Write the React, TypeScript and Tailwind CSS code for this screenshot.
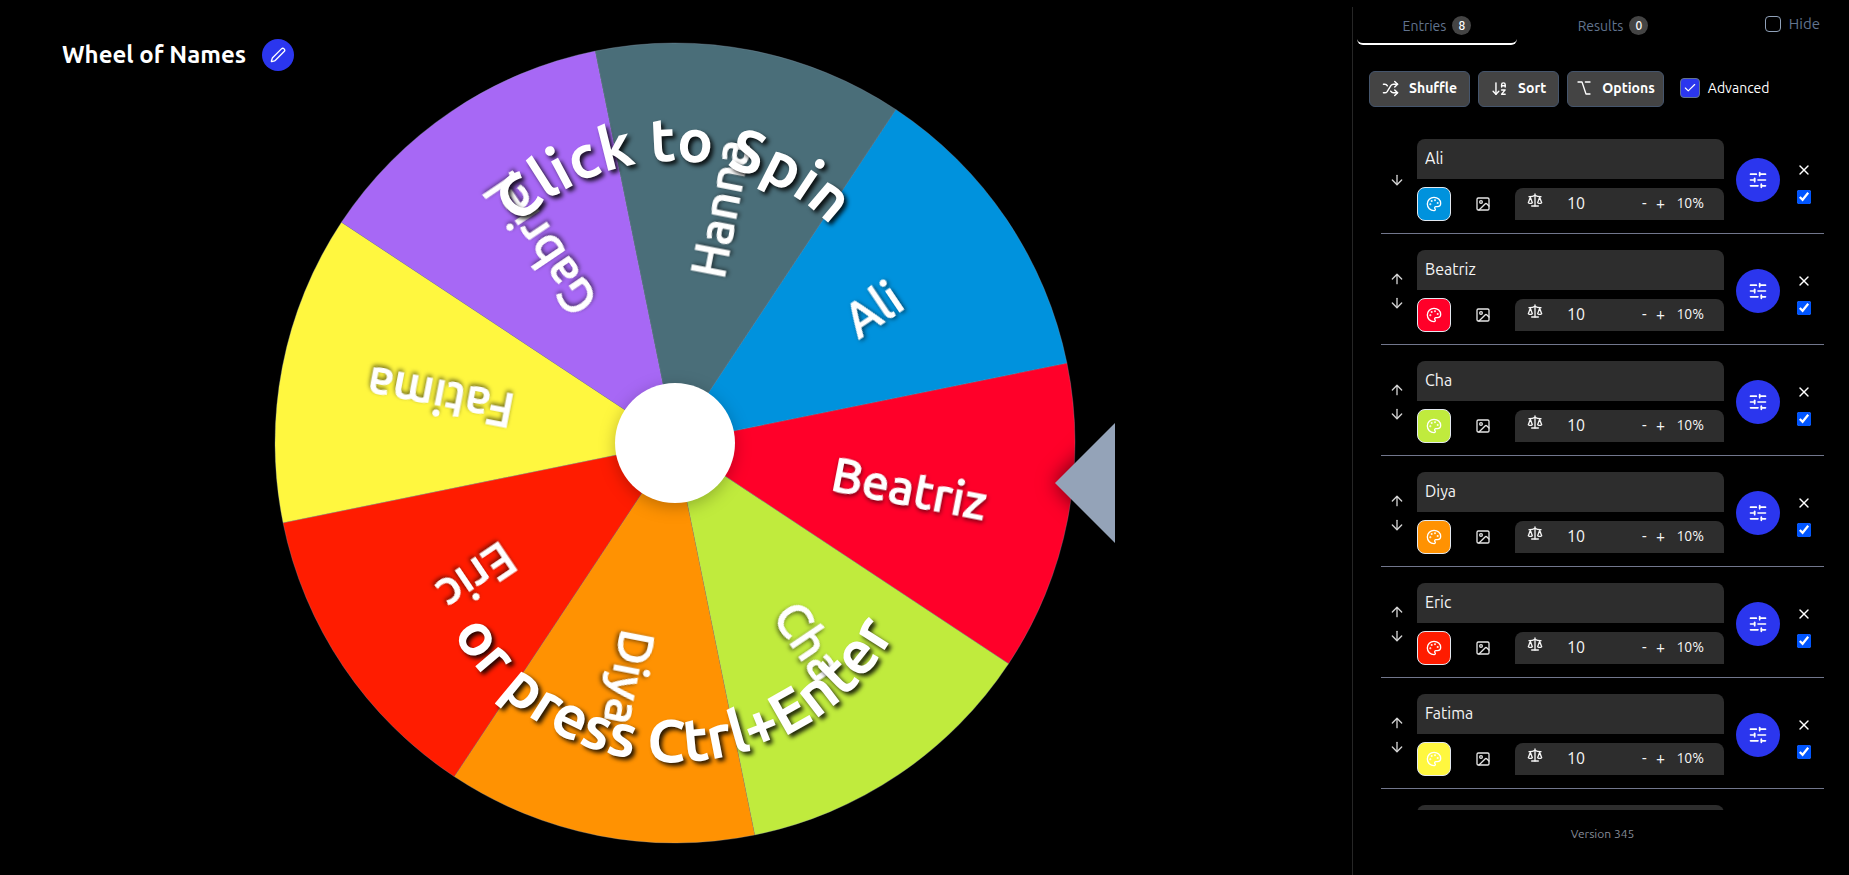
import { useState } from "react";
import {
  ArrowDown,
  ArrowDownAZ,
  ArrowUp,
  Check,
  Image as ImageIcon,
  Option,
  Palette,
  Scale,
  Shuffle,
  SlidersHorizontal,
  X,
} from "lucide-react";

type Entry = { name: string; color: string; weight: number };

const initialEntries: Entry[] = [
  { name: "Ali", color: "#0092dd", weight: 10 },
  { name: "Beatriz", color: "#ff0029", weight: 10 },
  { name: "Cha", color: "#c0eb3d", weight: 10 },
  { name: "Diya", color: "#ff9202", weight: 10 },
  { name: "Eric", color: "#ff1c00", weight: 10 },
  { name: "Fatima", color: "#fff73f", weight: 10 },
  { name: "Gabriel", color: "#a768f5", weight: 10 },
  { name: "Hanna", color: "#4a6e79", weight: 10 },
];

const CX = 675;
const CY = 443;
const R = 400;
const START = -34;

function point(deg: number) {
  const rad = (deg * Math.PI) / 180;
  return `${CX + R * Math.cos(rad)} ${CY + R * Math.sin(rad)}`;
}

function Wheel({ entries }: { entries: Entry[] }) {
  const step = 360 / entries.length;
  return (
    <svg
      viewBox="0 0 1352 875"
      className="block h-full w-full [font-family:Ubuntu,'Noto_Sans',sans-serif]"
      role="img"
      aria-label="Wheel"
    >
      {entries.map((e, i) => {
        const mid = START + i * step;
        return (
          <path
            key={e.name}
            d={`M${CX} ${CY}L${point(mid - step / 2)}A${R} ${R} 0 0 1 ${point(mid + step / 2)}Z`}
            fill={e.color}
            stroke="#94a3b8"
            strokeOpacity="0.5"
            strokeWidth="0.6"
          />
        );
      })}
      {entries.map((e, i) => (
        <g key={e.name} transform={`rotate(${START + i * step} ${CX} ${CY})`}>
          <text
            x={CX + 239}
            y={CY + 17}
            textAnchor="middle"
            fontSize="48"
            fontWeight="500"
            fill="#fff"
            stroke="#fff"
            strokeWidth="1"
            className="drop-shadow-[1px_2px_2px_rgba(0,0,0,0.55)]"
          >
            {e.name}
          </text>
        </g>
      ))}
      <circle cx={CX} cy={CY} r="60" fill="#fff" className="drop-shadow-[0_4px_8px_rgba(0,0,0,0.25)]" />
      <defs>
        <path id="arc-top" d="M452 383A222 222 0 0 1 896 383" />
        <path id="arc-bottom" d="M420 508A254 254 0 0 0 928 508" />
      </defs>
      <g
        fill="#fff"
        fontSize="60"
        fontWeight="600"
        textAnchor="middle"
        className="drop-shadow-[3px_3px_2px_rgba(0,0,0,0.85)]"
      >
        <text>
          <textPath href="#arc-top" startOffset="50%">
            Click to Spin
          </textPath>
        </text>
        <text>
          <textPath href="#arc-bottom" startOffset="50%">
            or press Ctrl+Enter
          </textPath>
        </text>
      </g>
      <path
        d="M1055 483L1115 423V543Z"
        fill="#94a3b8"
        className="drop-shadow-[0_0_10px_rgba(0,0,0,0.6)]"
      />
    </svg>
  );
}

function PencilIcon() {
  return (
    <svg viewBox="0 0 24 24" className="size-4" fill="none" stroke="currentColor" strokeWidth="2" strokeLinecap="round" strokeLinejoin="round">
      <path d="M21.17 6.81a1 1 0 0 0-3.99-3.99L3.84 16.17a2 2 0 0 0-.5.83l-1.32 4.35a.5.5 0 0 0 .62.62l4.35-1.32a2 2 0 0 0 .83-.5z" />
    </svg>
  );
}

function Tab({ label, count, active }: { label: string; count: number; active?: boolean }) {
  return (
    <button
      role="tab"
      aria-selected={!!active}
      className={
        "flex h-[45px] w-40 items-center justify-center gap-1.5 rounded-md border-b-2 pt-2 text-sm text-slate-500 " +
        (active ? "border-white" : "border-transparent")
      }
    >
      {label}
      <span className="flex size-[19px] items-center justify-center rounded-full bg-[#444] text-xs font-medium text-white">
        {count}
      </span>
    </button>
  );
}

function Row({ entry, first, last, share }: { entry: Entry; first: boolean; last: boolean; share: number }) {
  const [on, setOn] = useState(true);
  return (
    <li className="flex items-center border-b border-[#71768c] pt-4 pb-3">
      <div className="flex w-9 shrink-0 flex-col items-start gap-2 pl-2 text-[#d4d4d4]">
        {!first && (
          <button aria-label={`Move ${entry.name} up`}>
            <ArrowUp size={16} />
          </button>
        )}
        {!last && (
          <button aria-label={`Move ${entry.name} down`}>
            <ArrowDown size={16} />
          </button>
        )}
      </div>
      <div className="flex min-w-0 flex-1 flex-col gap-2">
        <input
          aria-label="Entry name"
          defaultValue={entry.name}
          className="h-10 w-full rounded-t-lg bg-[#2d2d2d] px-2 pb-0.5 text-base text-neutral-100 outline-none"
        />
        <div className="flex items-center">
          <button
            aria-label="Color"
            style={{ backgroundColor: entry.color }}
            className="flex size-[34px] items-center justify-center rounded-lg border border-slate-200 text-white"
          >
            <Palette size={16} />
          </button>
          <button aria-label="Image" className="flex w-16 items-center justify-center text-neutral-200">
            <ImageIcon size={16} />
          </button>
          <div className="flex h-8 min-w-0 flex-1 items-center rounded-t-lg bg-[#2d2d2d] pr-5 pb-0.5 pl-3 text-neutral-100">
            <Scale size={16} className="mb-1.5 shrink-0" />
            <input
              aria-label="Weight"
              defaultValue={entry.weight}
              className="ml-6 w-16 min-w-0 flex-1 bg-transparent text-base outline-none"
            />
            <button aria-label="Decrease weight" className="w-4 text-base">
              -
            </button>
            <button aria-label="Increase weight" className="w-4 text-base">
              +
            </button>
            <span className="ml-2 text-sm">{share}%</span>
          </div>
        </div>
      </div>
      <button
        aria-label="Entry settings"
        className="ml-3 flex size-11 shrink-0 items-center justify-center rounded-full bg-[#2b36ee] text-white"
      >
        <SlidersHorizontal size={20} />
      </button>
      <div className="flex w-11 shrink-0 flex-col items-center gap-3 pt-1.5 pl-1 text-white">
        <button aria-label={`Remove ${entry.name}`}>
          <X size={16} />
        </button>
        <input
          type="checkbox"
          aria-label={`Include ${entry.name}`}
          checked={on}
          onChange={() => setOn(!on)}
          className="size-3.5 accent-[#0055ff]"
        />
      </div>
    </li>
  );
}

const toolButton =
  "flex h-9 items-center gap-2.5 rounded-md border border-slate-600 bg-[#444] pb-0.5 text-sm font-semibold text-white";

export default function App() {
  const [advanced, setAdvanced] = useState(true);
  const [hide, setHide] = useState(false);
  const total = 100;
  return (
    <div className="flex h-screen overflow-hidden bg-black [font-family:Ubuntu,'Noto_Sans',sans-serif]">
      <main className="grid min-w-0 flex-1 grid-rows-[100%]">
        <div className="min-h-0 min-w-0 [grid-area:1/1]">
          <Wheel entries={initialEntries} />
        </div>
        <header className="z-10 flex items-center gap-4 self-start justify-self-start pt-[39px] pl-[62px] [grid-area:1/1]">
          <h1 className="text-2xl font-semibold text-white">Wheel of Names</h1>
          <button
            aria-label="Edit title"
            className="flex size-8 items-center justify-center rounded-full bg-[#2b36ee] text-white"
          >
            <PencilIcon />
          </button>
        </header>
      </main>

      <aside className="mt-[7px] flex w-[497px] shrink-0 flex-col border-l border-neutral-800">
        <div className="-mt-[7px] flex items-start pl-1">
          <div role="tablist" className="flex gap-4">
            <Tab label="Entries" count={initialEntries.length} active />
            <Tab label="Results" count={0} />
          </div>
          <label className="mt-3.5 mr-[29px] ml-auto flex items-center gap-2 text-[15px] leading-5 text-slate-500">
            <input
              type="checkbox"
              checked={hide}
              onChange={() => setHide(!hide)}
              className="size-4 appearance-none rounded border border-slate-400"
            />
            Hide
          </label>
        </div>

        <div className="mt-[26px] flex items-center gap-2 pl-4">
          <button className={toolButton + " px-3"}>
            <Shuffle size={17} />
            Shuffle
          </button>
          <button className={toolButton + " px-3"}>
            <ArrowDownAZ size={17} />
            Sort
          </button>
          <button className={toolButton + " px-2"}>
            <Option size={16} />
            Options
          </button>
          <label className="ml-2 flex items-center gap-2 pb-0.5 text-sm text-white">
            <span className="grid size-5">
              <input
                type="checkbox"
                checked={advanced}
                onChange={() => setAdvanced(!advanced)}
                className="size-5 appearance-none rounded border border-slate-500 checked:bg-[#2b36ee] [grid-area:1/1]"
              />
              {advanced && <Check size={14} className="pointer-events-none self-center justify-self-center [grid-area:1/1]" />}
            </span>
            Advanced
          </label>
        </div>

        <ul className="mt-4 mr-[25px] ml-7 min-h-0 flex-1 overflow-y-auto [scrollbar-width:none]">
          {initialEntries.map((e, i) => (
            <Row key={e.name} entry={e} first={i === 0} last={i === initialEntries.length - 1} share={(e.weight * 100) / total} />
          ))}
        </ul>
        <footer className="flex h-[65px] items-start justify-center pt-4 pr-[25px] pl-7 text-xs text-[#868c98]">
          Version 345
        </footer>
      </aside>
    </div>
  );
}
